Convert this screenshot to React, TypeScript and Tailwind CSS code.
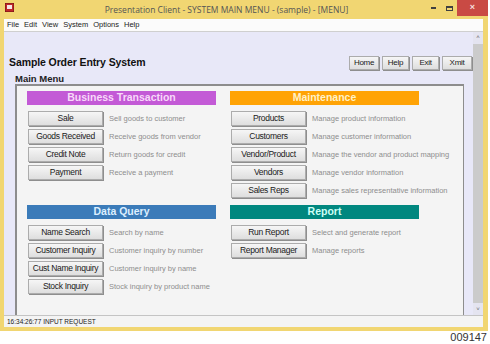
const sections = [
  {
    title: "Business Transaction",
    bar: "bg-[#c35ad6]",
    text: "text-[#f8d8fa]",
    rows: [
      ["Sale", "Sell goods to customer"],
      ["Goods Received", "Receive goods from vendor"],
      ["Credit Note", "Return goods for credit"],
      ["Payment", "Receive a payment"],
    ],
  },
  {
    title: "Maintenance",
    bar: "bg-[#ffa305]",
    text: "text-[#fff2c8]",
    rows: [
      ["Products", "Manage product information"],
      ["Customers", "Manage customer information"],
      ["Vendor/Product", "Manage the vendor and product mapping"],
      ["Vendors", "Manage vendor information"],
      ["Sales Reps", "Manage sales representative information"],
    ],
  },
  {
    title: "Data Query",
    bar: "bg-[#3b7bb9]",
    text: "text-[#dcefff]",
    rows: [
      ["Name Search", "Search by name"],
      ["Customer Inquiry", "Customer inquiry by number"],
      ["Cust Name Inquiry", "Customer inquiry by name"],
      ["Stock Inquiry", "Stock  inquiry by product name"],
    ],
  },
  {
    title: "Report",
    bar: "bg-[#00877f]",
    text: "text-[#cdfff6]",
    rows: [
      ["Run Report", "Select and generate report"],
      ["Report Manager", "Manage reports"],
    ],
  },
];

const btn =
  "shrink-0 flex items-center justify-center bg-gradient-to-b from-[#f6f6f6] to-[#dedede] border border-[#acacac] shadow-[1px_1px_0_#8e8e8e] text-[#1a1a1a] whitespace-nowrap tracking-[-0.3px]";

const App = () => {
  return (
    <div className="w-[490px] h-[344px] bg-white flex flex-col font-['Liberation_Sans',Arial,sans-serif]">
      <div className="w-[488px] h-[331px] bg-[#f1d672] flex flex-col">
        {/* title bar */}
        <div className="h-[19px] flex items-start relative">
          <div className="pl-[5px] pt-[3px]">
            <svg width="9" height="9" viewBox="0 0 9 9">
              <rect x="0" y="0" width="9" height="9" fill="#c0282a" />
              <rect x="2" y="2" width="5" height="4" fill="#f4e6e6" />
              <rect x="0" y="0" width="9" height="9" fill="none" stroke="#6a1010" strokeWidth="1" />
            </svg>
          </div>
          <div className="flex-1 text-center text-[8.5px] leading-[19px] text-[#555] font-['Open_Sans',sans-serif] pl-[14px]">
            Presentation Client - SYSTEM MAIN MENU - (sample) - [MENU]
          </div>
          <div className="flex items-start h-[16px]">
            <div className="w-[16px] h-[16px] flex items-center justify-center">
              <div className="w-[5px] h-[2px] bg-[#404040]" />
            </div>
            <div className="w-[16px] h-[16px] flex items-center justify-center">
              <div className="w-[7px] h-[5px] border border-[#404040] border-t-2" />
            </div>
            <div className="w-[31px] h-[16px] bg-[#c94a44] flex items-center justify-center text-[9px] font-bold text-[#f6dede]">
              ×
            </div>
          </div>
        </div>

        {/* client area */}
        <div className="flex-1 ml-[4px] mr-[5px] mb-[4px] flex flex-col">
          <div className="h-[13px] bg-[#fbfbfb] border-b border-[#cfcfcf] flex items-center pl-[3px] gap-[5px] text-[7.5px] text-[#222]">
            <span>File</span>
            <span>Edit</span>
            <span>View</span>
            <span>System</span>
            <span>Options</span>
            <span>Help</span>
          </div>

          <div className="flex-1 flex bg-[#e8e8f8]">
            <div className="flex-1 flex flex-col pt-[23px]">
              <div className="flex items-center justify-between pr-[1px]">
                <span className="pl-[5px] text-[10.5px] font-bold text-[#111] tracking-[-0.1px]">
                  Sample Order Entry System
                </span>
                <div className="flex gap-[3px]">
                  {["Home", "Help", "Exit", "Xmit"].map((b, i) => (
                    <div
                      key={b}
                      className={`${btn} h-[14px] text-[8px] ${i === 0 ? "w-[30px]" : i === 3 ? "w-[30px]" : "w-[27px]"}`}
                    >
                      {b}
                    </div>
                  ))}
                </div>
              </div>
              <div className="pl-[11px] mt-[2px] text-[9.5px] font-bold text-[#222] leading-[11px]">
                Main Menu
              </div>
              <div className="flex-1 ml-[11px] mr-[9px] bg-[#f4f4f4] border-l-2 border-t-2 border-r border-[#8d8d8d] pl-[10px] pt-[5px]">
                <div className="grid grid-cols-[189px_189px] gap-x-[14px] gap-y-[7px]">
                  {sections.map((s) => (
                    <div key={s.title} className="flex flex-col">
                      <div
                        className={`h-[14px] ${s.bar} ${s.text} flex items-center justify-center text-[10.5px] font-bold`}
                      >
                        {s.title}
                      </div>
                      <div className="flex flex-col gap-[3px] mt-[6px]">
                        {s.rows.map(([label, desc]) => (
                          <div key={label} className="flex items-center">
                            <div className={`${btn} ml-[1px] w-[75px] h-[15px] text-[8.5px]`}>
                              {label}
                            </div>
                            <span className="ml-[6px] text-[7.5px] text-[#8e8e8e] whitespace-nowrap">
                              {desc}
                            </span>
                          </div>
                        ))}
                      </div>
                    </div>
                  ))}
                </div>
              </div>
            </div>

            {/* scrollbar */}
            <div className="w-[10px] flex flex-col bg-[#e4e4f0]">
              <div className="h-[11px] flex items-center justify-center text-[6px] text-[#606060]">
                ˄
              </div>
              <div className="flex-1 bg-[#cbcbcb] my-[1px]" />
              <div className="h-[11px] flex items-center justify-center text-[6px] text-[#606060]">
                ˅
              </div>
            </div>
          </div>

          <div className="h-[12px] bg-[#f4f4f4] border-t border-[#c4c4c4] flex items-center pl-[3px] text-[6.5px] text-[#222]">
            16:34:26:77 INPUT REQUEST
          </div>
        </div>
      </div>
      <div className="w-[488px] text-right text-[11px] text-[#333] leading-[13px] pr-[1px]">
        009147
      </div>
    </div>
  );
};

export default App;
